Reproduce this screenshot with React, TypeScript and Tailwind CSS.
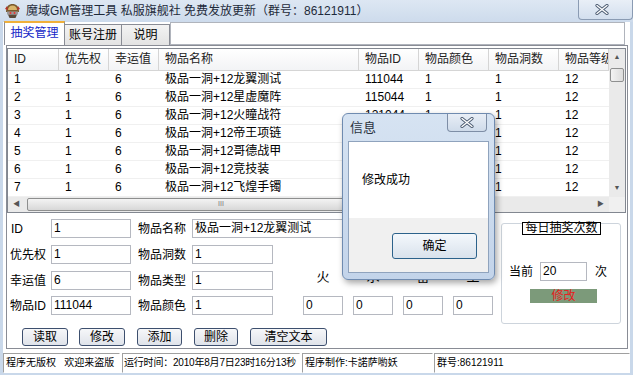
import React from 'react';

const cols = [
  { t: 'ID', w: 51 },
  { t: '优先权', w: 50 },
  { t: '幸运值', w: 50 },
  { t: '物品名称', w: 200 },
  { t: '物品ID', w: 60 },
  { t: '物品颜色', w: 70 },
  { t: '物品洞数', w: 70 },
  { t: '物品等级', w: 50 },
];

const rows = [
  ['1', '1', '6', '极品一洞+12龙翼测试', '111044', '1', '1', '12'],
  ['2', '1', '6', '极品一洞+12星虚魔阵', '115044', '1', '1', '12'],
  ['3', '1', '6', '极品一洞+12火瞳战符', '121044', '1', '1', '12'],
  ['4', '1', '6', '极品一洞+12帝王项链', '120044', '1', '1', '12'],
  ['5', '1', '6', '极品一洞+12哥德战甲', '131044', '1', '1', '12'],
  ['6', '1', '6', '极品一洞+12竞技装', '160044', '1', '1', '12'],
  ['7', '1', '6', '极品一洞+12飞煌手镯', '152044', '1', '1', '12'],
];

function CloseGlyph() {
  return (
    <svg width="14" height="11" viewBox="0 0 14 11">
      <path d="M2 1.5 L12 9.5 M12 1.5 L2 9.5" stroke="#4a5a70" strokeWidth="3.2" strokeLinecap="round" />
      <path d="M2 1.5 L12 9.5 M12 1.5 L2 9.5" stroke="#ffffff" strokeWidth="1.4" strokeLinecap="round" />
    </svg>
  );
}

function AppIcon() {
  return (
    <svg width="17" height="16" viewBox="0 0 17 16">
      <path d="M2 9 C2 3 5 1 8.5 1 C12 1 15 3 15 9 Z" fill="#7a5a2e" />
      <path d="M4 7 C4 4 6 2.5 8.5 2.5 C11 2.5 13 4 13 7 Z" fill="#d9b56a" />
      <path d="M1 6 L3 3 L4 7 Z M16 6 L14 3 L13 7 Z" fill="#b8322a" />
      <rect x="3" y="8.5" width="11" height="3" fill="#9a9a9a" />
      <path d="M4 11.5 L13 11.5 L11.5 15 L5.5 15 Z" fill="#5a4a3a" />
      <circle cx="6.5" cy="10" r="1" fill="#e33" />
      <circle cx="10.5" cy="10" r="1" fill="#e33" />
    </svg>
  );
}

function Field({ w, v }: { w: string; v: string }) {
  return (
    <div className={`${w} h-[19px] overflow-hidden whitespace-nowrap border border-[#b5b8c0] bg-white pl-[2px] text-[12px] leading-[17px] text-black`}>
      {v}
    </div>
  );
}

function Btn({ w, t }: { w: string; t: string }) {
  return (
    <div className={`${w} h-[18px] rounded-[3px] border border-[#3d4f6e] bg-gradient-to-b from-[#f6f7f9] to-[#dfe3ea] text-center text-[12px] leading-[16px] text-black`}>
      {t}
    </div>
  );
}

export default function App() {
  return (
    <div className="relative h-[375px] w-[633px] overflow-hidden bg-[#c9d8ea] font-['Liberation_Sans','Noto_Sans_CJK_SC',sans-serif] text-black">
      {/* title bar */}
      <div className="flex h-[22px] items-start bg-gradient-to-b from-[#dde7f3] to-[#cddbec]">
        <div className="ml-[4px] mt-[3px]">
          <AppIcon />
        </div>
        <div className="ml-[5px] mt-[3px] w-[352px] overflow-hidden whitespace-nowrap text-[12px] leading-[16px] text-[#1e2a3a]">
          魔域GM管理工具 私服旗舰社 免费发放更新（群号：86121911）
        </div>
        <div className="ml-auto flex h-[20px] w-[55px] items-center justify-center rounded-b-[4px] border border-t-0 border-[#8a9bb3] bg-gradient-to-b from-[#e9eff7] to-[#d3dfee] pr-[8px]">
          <CloseGlyph />
        </div>
      </div>

      {/* client */}
      <div className="ml-[3px] flex h-[351px] w-[627px] flex-col bg-white">
        {/* tab strip */}
        <div className="flex h-[23px] items-end">
          <div className="ml-[1px] h-[24px] w-[61px] border border-b-0 border-[#898c95] border-t-[2px] border-t-[#f0b03a] bg-white text-center text-[12px] leading-[20px] text-[#1428c8]">
            抽奖管理
          </div>
          <div className="h-[21px] w-[57px] border border-b-0 border-l-0 border-[#898c95] bg-gradient-to-b from-[#f3f3f3] to-[#e3e3e3] text-center text-[12px] leading-[20px]">
            账号注册
          </div>
          <div className="h-[21px] w-[48px] border border-b-0 border-l-0 border-[#898c95] bg-gradient-to-b from-[#f3f3f3] to-[#e3e3e3] text-center text-[12px] leading-[20px]">
            说明
          </div>
          <div className="h-[23px] w-[455px] border border-[#b0b4bc] bg-white" />
        </div>

        {/* tab panel */}
        <div className="ml-[3px] flex h-[304px] w-[622px] flex-col border border-[#898c95] bg-white">
          {/* list view */}
          <div className="mt-[2px] flex h-[165px] w-[619px] flex-col border border-[#828790]">
            <div className="flex h-[148px]">
              <div className="flex w-[601px] flex-col overflow-hidden">
                <div className="flex h-[22px] bg-gradient-to-b from-[#ffffff] to-[#f2f3f5]">
                  {cols.map((c) => (
                    <div
                      key={c.t}
                      style={{ width: c.w }}
                      className="shrink-0 overflow-hidden whitespace-nowrap border-r border-b border-[#d5d5d5] pl-[6px] text-[12px] leading-[21px] text-[#222]"
                    >
                      {c.t}
                    </div>
                  ))}
                </div>
                {rows.map((r, i) => (
                  <div key={i} className="flex h-[18px] border-b border-[#f0f0f0]">
                    {r.map((v, j) => (
                      <div
                        key={j}
                        style={{ width: cols[j].w }}
                        className="shrink-0 overflow-hidden whitespace-nowrap pl-[6px] text-[12px] leading-[17px]"
                      >
                        {v}
                      </div>
                    ))}
                  </div>
                ))}
              </div>
              {/* vertical scrollbar */}
              <div className="flex w-[16px] flex-col bg-[#eaeaea]">
                <div className="flex h-[17px] items-center justify-center text-[7px] text-[#555]">▲</div>
                <div className="mx-[1px] mt-[2px] h-[14px] rounded-[2px] border border-[#8e8f8f] bg-gradient-to-r from-[#f3f3f3] to-[#dcdcdc]" />
                <div className="flex-1" />
                <div className="flex h-[17px] items-center justify-center text-[7px] text-[#555]">▼</div>
              </div>
            </div>
            {/* horizontal scrollbar */}
            <div className="flex h-[15px] items-center bg-[#eaeaea]">
              <div className="flex w-[17px] items-center justify-center text-[7px] text-[#555]">◀</div>
              <div className="ml-[2px] flex h-[13px] w-[388px] items-center justify-center rounded-[2px] border border-[#8e8f8f] bg-gradient-to-b from-[#f3f3f3] to-[#d8d8d8] text-[7px] text-[#777]">
                III
              </div>
              <div className="flex-1" />
              <div className="flex w-[17px] items-center justify-center text-[7px] text-[#555]">▶</div>
              <div className="h-[15px] w-[16px] bg-[#f0f0f0]" />
            </div>
          </div>

          {/* form */}
          <div className="flex pl-[3px] text-[12px]">
            <div className="flex w-[483px] flex-col pt-[6px]">
              <div className="flex h-[19px] items-center">
                <div className="w-[41px] pl-[1px]">ID</div>
                <Field w="w-[80px]" v="1" />
                <div className="ml-[7px] w-[54px]">物品名称</div>
                <Field w="w-[153px]" v="极品一洞+12龙翼测试" />
              </div>
              <div className="mt-[7px] flex h-[19px] items-center">
                <div className="w-[41px]">优先权</div>
                <Field w="w-[80px]" v="1" />
                <div className="ml-[7px] w-[54px]">物品洞数</div>
                <Field w="w-[81px]" v="1" />
              </div>
              <div className="mt-[7px] flex h-[19px] items-center">
                <div className="w-[41px]">幸运值</div>
                <Field w="w-[80px]" v="6" />
                <div className="ml-[7px] w-[54px]">物品类型</div>
                <Field w="w-[81px]" v="1" />
                <div className="ml-[30px] flex gap-[10px] pb-[8px]">
                  {['火', '水', '雷', '土'].map((t) => (
                    <div key={t} className="w-[40px] text-center text-[13px]">
                      {t}
                    </div>
                  ))}
                </div>
              </div>
              <div className="mt-[6px] flex h-[19px] items-center">
                <div className="w-[41px]">物品ID</div>
                <Field w="w-[80px]" v="111044" />
                <div className="ml-[7px] w-[54px]">物品颜色</div>
                <Field w="w-[81px]" v="1" />
                <div className="ml-[30px] flex gap-[10px]">
                  {[0, 1, 2, 3].map((k) => (
                    <Field key={k} w="w-[40px]" v="0" />
                  ))}
                </div>
              </div>
              <div className="ml-[12px] mt-[13px] flex">
                <Btn w="w-[46px]" t="读取" />
                <div className="ml-[11px]">
                  <Btn w="w-[46px]" t="修改" />
                </div>
                <div className="ml-[12px]">
                  <Btn w="w-[45px]" t="添加" />
                </div>
                <div className="ml-[12px]">
                  <Btn w="w-[44px]" t="删除" />
                </div>
                <div className="ml-[12px]">
                  <Btn w="w-[77px]" t="清空文本" />
                </div>
              </div>
            </div>

            {/* group box */}
            <div className="relative ml-[8px] mt-[10px] h-[101px] w-[120px] rounded-[3px] border border-[#cdd4dc]">
              <div className="absolute left-[20px] top-[-2px] h-[13px] w-[79px] border border-black bg-white text-center text-[12px] leading-[11px]">
                每日抽奖次数
              </div>
              <div className="mt-[38px] flex items-center">
                <div className="ml-[7px] w-[31px]">当前</div>
                <Field w="w-[47px]" v="20" />
                <div className="ml-[8px]">次</div>
              </div>
              <div className="ml-[28px] mt-[8px] h-[14px] w-[67px] bg-[#7c9a7a] text-center text-[12px] leading-[14px] text-[#e82020]">
                修改
              </div>
            </div>
          </div>
        </div>

        {/* status bar */}
        <div className="mt-[4px] flex h-[20px] text-[10px] leading-[18px]">
          <div className="w-[117px] overflow-hidden whitespace-nowrap border border-[#a0a0a0] border-b-white border-r-white pl-[2px]">
            程序无版权&nbsp;&nbsp;&nbsp;欢迎来盗版
          </div>
          <div className="ml-[2px] w-[178px] overflow-hidden whitespace-nowrap border border-[#a0a0a0] border-b-white border-r-white pl-[1px] tracking-[-0.2px]">
            运行时间：2010年8月7日23时16分13秒
          </div>
          <div className="ml-[2px] w-[131px] overflow-hidden whitespace-nowrap border border-[#a0a0a0] border-b-white border-r-white pl-[2px]">
            程序制作:卡諾萨喲妖
          </div>
          <div className="ml-[1px] flex-1 overflow-hidden whitespace-nowrap border border-[#a0a0a0] border-b-white border-r-white pl-[2px]">
            群号:86121911
          </div>
        </div>
      </div>

      {/* message box */}
      <div className="absolute left-[342px] top-[113px] flex h-[167px] w-[153px] flex-col rounded-[6px] border border-[#6f8bb0] bg-gradient-to-b from-[#d6e3f2] to-[#c3d4ea] shadow-[2px_3px_6px_rgba(0,0,0,0.35)]">
        <div className="flex h-[27px] items-start">
          <div className="ml-[7px] mt-[6px] text-[13px] leading-[16px] text-[#2a3340]">信息</div>
          <div className="ml-auto mr-[7px] flex h-[18px] w-[40px] items-center justify-center rounded-b-[4px] border border-t-0 border-[#7e8ea6] bg-gradient-to-b from-[#e8eef6] to-[#cfdbea]">
            <CloseGlyph />
          </div>
        </div>
        <div className="mx-[5px] flex h-[132px] flex-col border border-[#8fa3bd]">
          <div className="h-[76px] bg-white pl-[13px] pt-[31px] text-[12px] leading-[14px]">修改成功</div>
          <div className="flex flex-1 bg-[#f0f0f0]">
            <div className="ml-[43px] mt-[15px] h-[26px] w-[85px] rounded-[3px] border border-[#2c628b] bg-gradient-to-b from-[#f4f8fc] to-[#d9e2ec] text-center text-[12px] leading-[24px]">
              确定
            </div>
          </div>
        </div>
      </div>
    </div>
  );
}
